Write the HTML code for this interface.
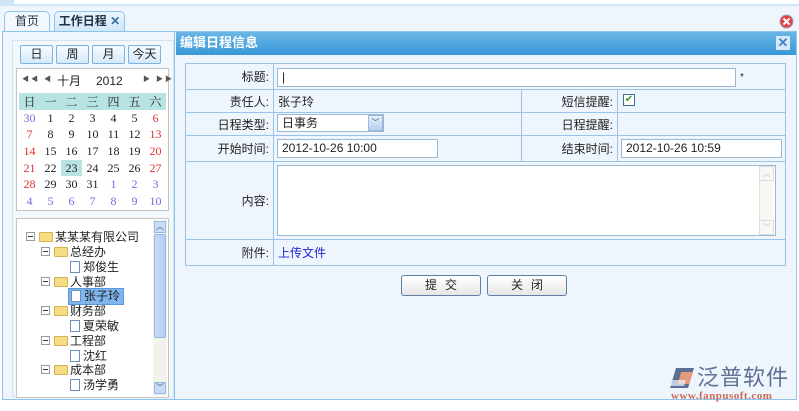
<!DOCTYPE html>
<html><head><meta charset="utf-8">
<style>
*{margin:0;padding:0;box-sizing:border-box}
body{width:799px;height:411px;background:#fff;font-family:"Liberation Sans","Noto Sans CJK SC",sans-serif;font-size:12px;color:#222;position:relative;overflow:hidden}
.a{position:absolute}
.tab{position:absolute;top:11px;height:21px;border:1px solid #8cc4ee;border-bottom:none;border-radius:5px 5px 0 0;background:linear-gradient(#f4f9fe,#dfeefb);text-align:center;line-height:19px;font-size:12px;color:#234}
.btn{position:absolute;top:45px;height:19px;border:1px solid #7fb3df;border-radius:2px;background:linear-gradient(#f6fbff,#d6e9fa);text-align:center;line-height:17px;font-size:12px}
.cal td{width:21px;height:16.6px;text-align:center;font-family:"Liberation Serif","Noto Serif CJK SC",serif;font-size:12px;padding:0}
.red{color:#e03030}.blu{color:#7070e0}
.tbl{position:absolute;left:185px;top:63px;border-collapse:collapse;background:#eef5fd}
.tbl td{border:1px solid #99c3e8;padding:0 4px;font-size:12px}
.lab{text-align:right}
.inp{position:absolute;background:#fff;border:1px solid #9bb8d3;font-size:12px;line-height:17px;padding-left:4px}
.tree div{position:absolute;font-size:12px;white-space:nowrap;height:15px;line-height:15px}
.fold{display:inline-block;width:14px;height:10px;background:#f6dc84;border:1px solid #d8b450;border-radius:1px;vertical-align:-1px;margin-right:2px}
.file{display:inline-block;width:10px;height:12px;background:#fff;border:1px solid #6f8fc0;vertical-align:-2px;margin-right:3px}
.mn{display:inline-block;width:9px;height:9px;border:1px solid #999;background:#fff;vertical-align:0;margin-right:4px;position:relative}
.mn:after{content:"";position:absolute;left:1px;top:3px;width:5px;height:1px;background:#333}
.bb{position:absolute;top:275px;width:80px;height:21px;border:1px solid #5d7fa3;border-radius:3px;background:linear-gradient(#fff,#e6e6e6);text-align:center;line-height:19px;font-size:12px;letter-spacing:8px;text-indent:8px}
</style></head><body>
<div class="a" style="left:0;top:4px;width:799px;height:2px;background:#cfe6f8"></div>
<div class="a" style="left:0;top:0;width:14px;height:5px;background:#cfe6f8"></div>
<div class="a" style="left:0;top:6px;width:799px;height:25px;background:#eef5fd"></div>
<div class="tab" style="left:4px;width:46px;background:#f3f8fe">首页</div>
<div class="tab" style="left:54px;width:71px;font-weight:bold;background:linear-gradient(#eaf5fe,#cfe6f8)">工作日程 <span style="color:#3a6da0">✕</span></div>
<svg class="a" style="left:779px;top:14px" width="15" height="15"><circle cx="7.5" cy="7.5" r="6.5" fill="#e84040" stroke="#9ab" stroke-width="1"/><path d="M4.5 4.5L10.5 10.5M10.5 4.5L4.5 10.5" stroke="#fff" stroke-width="2"/></svg>
<div class="a" style="left:2px;top:31px;width:795px;height:369px;border:1px solid #8cc4ee;background:#eef5fd"></div>
<div class="a" style="left:3px;top:32px;width:172px;height:367px;background:#eef5fd;border-right:1px solid #8cc4ee"></div>
<div class="a" style="left:12px;top:40px;width:162px;height:357px;border:1px solid #d3e3f2;background:#f3f8fd"></div>
<div class="btn" style="left:20px;width:33px">日</div>
<div class="btn" style="left:56px;width:33px">周</div>
<div class="btn" style="left:92px;width:33px">月</div>
<div class="btn" style="left:128px;width:33px">今天</div>
<div class="a" style="left:16px;top:68px;width:153px;height:143px;border:1px solid #c4c4c4;background:#fff"></div>
<div class="a" style="left:22px;top:74px;font-size:7px;color:#555;letter-spacing:2px">◀◀ ◀</div>
<div class="a" style="left:57px;top:72px;font-size:12px">十月</div>
<div class="a" style="left:96px;top:74px;font-size:12px">2012</div>
<div class="a" style="left:143px;top:74px;font-size:7px;color:#555;letter-spacing:2px">▶ ▶▶</div>
<div class="a" style="left:19px;top:93px;width:147px;height:17px;background:#b8e3e3"></div>
<table class="a cal" style="left:19px;top:93px;border-collapse:collapse">
<tr><td>日</td><td>一</td><td>二</td><td>三</td><td>四</td><td>五</td><td>六</td></tr>
<tr><td class="blu">30</td><td>1</td><td>2</td><td>3</td><td>4</td><td>5</td><td class="red">6</td></tr>
<tr><td class="red">7</td><td>8</td><td>9</td><td>10</td><td>11</td><td>12</td><td class="red">13</td></tr>
<tr><td class="red">14</td><td>15</td><td>16</td><td>17</td><td>18</td><td>19</td><td class="red">20</td></tr>
<tr><td class="red">21</td><td>22</td><td style="background:#b8e3e3">23</td><td>24</td><td>25</td><td>26</td><td class="red">27</td></tr>
<tr><td class="red">28</td><td>29</td><td>30</td><td>31</td><td class="blu">1</td><td class="blu">2</td><td class="blu">3</td></tr>
<tr><td class="blu">4</td><td class="blu">5</td><td class="blu">6</td><td class="blu">7</td><td class="blu">8</td><td class="blu">9</td><td class="blu">10</td></tr>
</table>
<div class="a" style="left:16px;top:218px;width:153px;height:180px;border:1px solid #c4c4c4;background:#fff;overflow:hidden"></div>
<div class="a" style="left:153px;top:220px;width:14px;height:176px;background:#f3f3ee"></div>
<div class="a" style="left:154px;top:221px;width:12px;height:12px;background:#c8dcf5;border:1px solid #9bb8e0;font-size:8px;text-align:center;line-height:10px;color:#345">︿</div>
<div class="a" style="left:154px;top:234px;width:12px;height:104px;background:linear-gradient(90deg,#c6dbf7,#b3cdf3);border:1px solid #9bb8e0;border-radius:2px"></div>
<div class="a" style="left:154px;top:382px;width:12px;height:12px;background:#c8dcf5;border:1px solid #9bb8e0;font-size:8px;text-align:center;line-height:10px;color:#345">﹀</div>
<div class="tree">
<div style="left:26px;top:230px"><span class="mn"></span><span class="fold"></span>某某某有限公司</div>
<div style="left:41px;top:245px"><span class="mn"></span><span class="fold"></span>总经办</div>
<div style="left:70px;top:260px"><span class="file"></span>郑俊生</div>
<div style="left:41px;top:275px"><span class="mn"></span><span class="fold"></span>人事部</div>
<div style="left:68px;top:288px;background:#7fb6ee;border:1px solid #5a96d8;padding:0 3px 0 2px;height:17px;line-height:15px"><span class="file"></span>张子玲</div>
<div style="left:41px;top:304px"><span class="mn"></span><span class="fold"></span>财务部</div>
<div style="left:70px;top:319px"><span class="file"></span>夏荣敏</div>
<div style="left:41px;top:334px"><span class="mn"></span><span class="fold"></span>工程部</div>
<div style="left:70px;top:349px"><span class="file"></span>沈红</div>
<div style="left:41px;top:363px"><span class="mn"></span><span class="fold"></span>成本部</div>
<div style="left:70px;top:378px"><span class="file"></span>汤学勇</div>
</div>
<div class="a" style="left:176px;top:32px;width:620px;height:23px;background:linear-gradient(#6ab6e6,#3798d8);color:#fff;font-weight:bold;font-size:13px;line-height:22px;padding-left:4px">编辑日程信息</div>
<div class="a" style="left:776px;top:36px;width:14px;height:14px;background:#d6e9fb;color:#3a84c8;font-weight:bold;font-size:13px;line-height:14px;text-align:center">✕</div>
<table class="tbl">
<tr style="height:26px"><td class="lab" style="width:88px">标题:</td><td colspan="3"></td></tr>
<tr style="height:23px"><td class="lab">责任人:</td><td style="width:248px">张子玲</td><td class="lab" style="width:96px">短信提醒:</td><td style="width:168px"></td></tr>
<tr style="height:23px"><td class="lab">日程类型:</td><td></td><td class="lab">日程提醒:</td><td></td></tr>
<tr style="height:26px"><td class="lab">开始时间:</td><td></td><td class="lab">结束时间:</td><td></td></tr>
<tr style="height:78px"><td class="lab">内容:</td><td colspan="3"></td></tr>
<tr style="height:26px"><td class="lab">附件:</td><td colspan="3" style="color:#2222dd">上传文件</td></tr>
</table>
<div class="inp" style="left:277px;top:68px;width:459px;height:19px">|</div>
<div class="a" style="left:740px;top:72px;font-size:10px">*</div>
<div class="a" style="left:623px;top:94px;width:12px;height:12px;border:1px solid #3b6ea0;background:#fff;color:#2a9a2a;font-size:10px;line-height:10px;text-align:center">✔</div>
<div class="inp" style="left:277px;top:114px;width:107px;height:18px;line-height:16px">日事务</div>
<div class="a" style="left:368px;top:115px;width:15px;height:16px;background:linear-gradient(#e4eefb,#b9d0ef);border:1px solid #9bb8e0;font-size:8px;color:#345;text-align:center;line-height:14px">﹀</div>
<div class="inp" style="left:277px;top:139px;width:161px;height:19px">2012-10-26 10:00</div>
<div class="inp" style="left:621px;top:139px;width:161px;height:19px">2012-10-26 10:59</div>
<div class="inp" style="left:277px;top:165px;width:499px;height:71px"></div>
<div class="a" style="left:759px;top:166px;width:15px;height:69px;background:#f7f7f3;border-left:1px solid #e4e4dc"></div>
<div class="a" style="left:759px;top:166px;width:15px;height:15px;border:1px solid #ddd;font-size:8px;color:#bbb;text-align:center;line-height:13px">︿</div>
<div class="a" style="left:759px;top:220px;width:15px;height:15px;border:1px solid #ddd;font-size:8px;color:#bbb;text-align:center;line-height:13px">﹀</div>
<div class="bb" style="left:401px">提交</div>
<div class="bb" style="left:487px">关闭</div>
<svg class="a" style="left:668px;top:366px" width="28" height="24"><path d="M8 2 L26 2 L20 22 L2 22 Z" fill="#5a6f93"/><path d="M13 6 L25 6 L21 18 L10 18 Z" fill="#e59a7c"/><path d="M4 14 L18 14 L16 20 L2 20Z" fill="#eef5fd" opacity=".7"/></svg>
<div class="a" style="left:697px;top:362px;width:100px;white-space:nowrap;font-size:22px;color:#5e7194;letter-spacing:1px;font-family:'Noto Sans CJK SC',sans-serif;line-height:28px">泛普软件</div>
<div class="a" style="left:671px;top:390px;white-space:nowrap;font-family:'Liberation Serif',serif;font-size:11px;color:#c96a55;letter-spacing:.5px;font-weight:bold">www.fanpusoft.com</div>
</body></html>
